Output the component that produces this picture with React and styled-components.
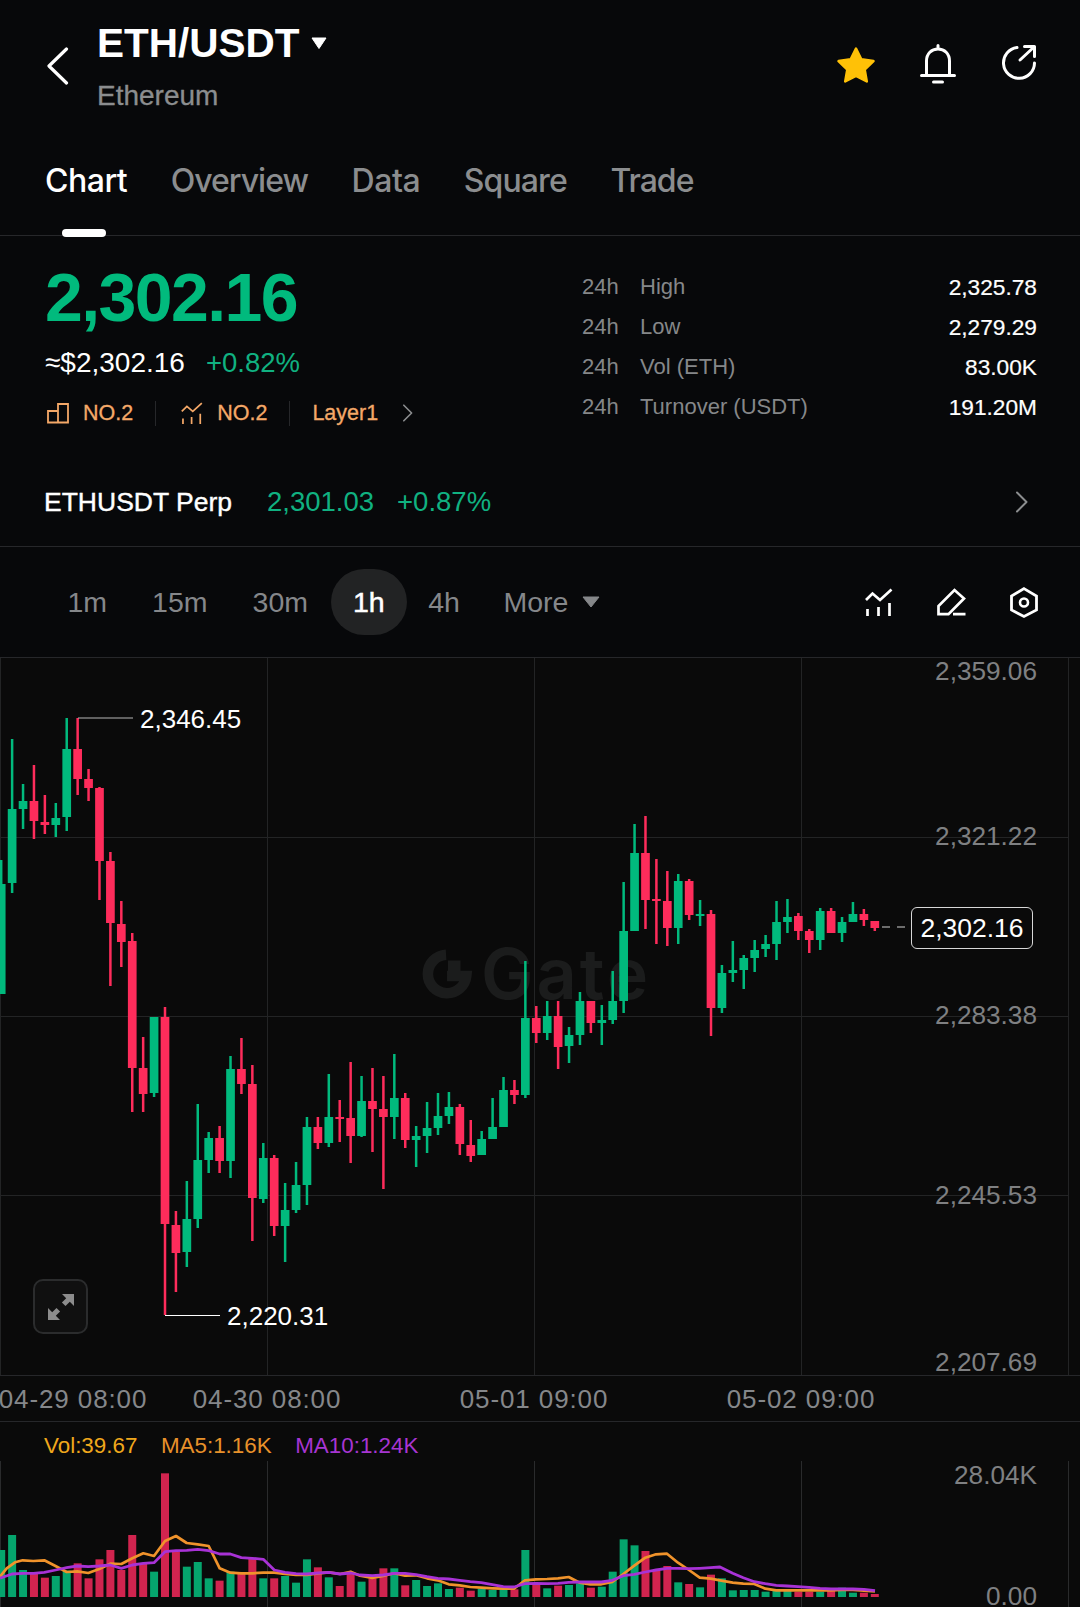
import React from "react";
import styled, { createGlobalStyle } from "styled-components";

const Global = createGlobalStyle`
  html, body { margin: 0; padding: 0; background: #07080a; }
  * { box-sizing: border-box; }
`;

const SANS = `"Liberation Sans", Arial, sans-serif`;
const UP = "#01ba7d";
const DOWN = "#fe2c5b";
const VOL_UP = "#05a56d";
const VOL_DOWN = "#d1244f";
const TAG = "#f4a868";

const Page = styled.div`
  width: 1080px;
  height: 1607px;
  overflow: hidden;
  background: #07080a;
  font-family: ${SANS};
  color: #fff;
`;

const Header = styled.header`
  height: 130px;
  display: flex;
  padding: 23px 43px 0 47px;
`;
const BackButton = styled.div`
  width: 50px;
  height: 40px;
  margin-top: 24px;
  svg { display: block; }
`;
const TitleBlock = styled.div`
  flex: 1;
  display: flex;
  flex-direction: column;
`;
const TitleLine = styled.div`
  display: flex;
  align-items: center;
  height: 40px;
  gap: 11px;
`;
const Title = styled.div`
  font-size: 40.5px;
  line-height: 40px;
  font-weight: 700;
`;
const Caret = styled.svg`
  display: block;
`;
const Subtitle = styled.div`
  margin-top: 17px;
  font-size: 28px;
  line-height: 32px;
  color: #8b8d8f;
  -webkit-text-stroke: 0.3px #8b8d8f;
`;
const HeaderIcons = styled.div`
  display: flex;
  align-items: flex-start;
  gap: 44px;
  padding-top: 21px;
  svg { display: block; }
`;
const StarIcon = styled.svg`
  margin-top: 2px;
`;

const Tabs = styled.nav`
  height: 106px;
  display: flex;
  gap: 43.5px;
  padding: 33px 0 0 45px;
  border-bottom: 1px solid #26272a;
`;
const Tab = styled.div`
  position: relative;
  height: 73px;
  font-family: Inter, sans-serif;
  font-size: 32px;
  line-height: 36px;
  font-weight: 500;
  letter-spacing: ${(p) => p.$ls}px;
  color: ${(p) => (p.$active ? "#fff" : "#8b8d8f")};
  ${(p) =>
    p.$active &&
    `&::after {
      content: "";
      position: absolute;
      left: 17px;
      bottom: -1px;
      width: 44px;
      height: 8px;
      border-radius: 4px;
      background: #fff;
    }`}
`;

const Quote = styled.section`
  height: 222px;
  display: flex;
  justify-content: space-between;
  padding: 27px 43px 0 45px;
`;
const QuoteLeft = styled.div`
  display: flex;
  flex-direction: column;
`;
const Price = styled.div`
  font-size: 68px;
  line-height: 68px;
  font-weight: 700;
  letter-spacing: -1.6px;
  color: ${UP};
`;
const SubPrice = styled.div`
  margin-top: 15px;
  display: flex;
  gap: 21px;
  font-size: 28px;
  line-height: 34px;
`;
const Change = styled.span`
  font-size: 27.5px;
  color: #10b181;
`;
const TagRow = styled.div`
  margin: 19px 0 0 2px;
  height: 28px;
  display: flex;
  align-items: center;
  font-size: 21.5px;
  color: ${TAG};
  -webkit-text-stroke: 0.3px ${TAG};
  svg { display: block; flex: none; }
`;
const Tag = styled.div`
  display: flex;
  align-items: center;
  gap: 14px;
  padding-right: 22px;
  margin-right: ${(p) => p.$mr}px;
  border-right: ${(p) => (p.$last ? "none" : "1px solid #26272a")};
`;
const TagChevron = styled.span`
  display: inline-flex;
  margin-left: 10px;
`;
const Stats = styled.div`
  width: 455px;
  padding-top: 4px;
  display: flex;
  flex-direction: column;
`;
const StatRow = styled.div`
  height: 40px;
  display: grid;
  grid-template-columns: 58px 1fr auto;
  align-items: center;
  font-size: 22px;
`;
const StatLabel = styled.span`
  color: #858789;
`;
const StatValue = styled.span`
  font-size: 22.7px;
  color: #fff;
  -webkit-text-stroke: 0.2px #fff;
`;

const PerpRow = styled.div`
  height: 89px;
  display: flex;
  align-items: center;
  padding: 0 52px 0 44px;
  border-bottom: 1px solid #26272a;
  gap: 35px;
  svg { display: block; margin-left: auto; }
`;
const PerpName = styled.div`
  font-size: 26.5px;
  -webkit-text-stroke: 0.4px #fff;
`;
const PerpPrices = styled.div`
  display: flex;
  gap: 23px;
  font-size: 27.5px;
  color: #10b181;
`;

const IntervalRow = styled.div`
  height: 111px;
  display: flex;
  align-items: center;
  padding: 0 42px 0 45px;
  border-bottom: 1px solid #26272a;
`;
const Interval = styled.div`
  height: 66px;
  display: flex;
  align-items: center;
  padding: 0 ${(p) => p.$px ?? 22.5}px;
  border-radius: 33px;
  font-size: 28.5px;
  background: ${(p) => (p.$active ? "#222324" : "transparent")};
  color: ${(p) => (p.$active ? "#fff" : "#85878a")};
  -webkit-text-stroke: ${(p) => (p.$active ? "0.5px #fff" : "0")};
`;
const MoreCaret = styled.svg`
  display: block;
  margin-left: 14px;
`;
const ToolIcons = styled.div`
  margin-left: auto;
  display: flex;
  align-items: center;
  gap: 44px;
  svg { display: block; }
`;

const ChartStage = styled.div`
  position: relative;
  height: 717px;
  background: #0a0a0a;
`;
const ChartSvg = styled.svg`
  position: relative;
  z-index: 1;
  display: block;
`;
const Watermark = styled.div`
  position: absolute;
  left: 422px;
  top: 290px;
  display: flex;
  align-items: center;
  gap: 7px;
  font-family: Inter, sans-serif;
  font-size: 70px;
  line-height: 50px;
  font-weight: 600;
  letter-spacing: 3px;
  color: #1b1c1c;
  svg { display: block; }
`;
const AxisLabel = styled.div`
  position: absolute;
  z-index: 2;
  right: 43px;
  transform: translateY(-50%);
  font-size: 26.2px;
  line-height: 20px;
  color: #7f8082;
`;
const PriceFlag = styled.div`
  position: absolute;
  z-index: 2;
  transform: translateY(-50%);
  font-size: 26px;
  line-height: 30px;
  color: #fff;
`;
const LastPrice = styled.div`
  position: absolute;
  z-index: 2;
  left: 911px;
  top: 249px;
  width: 122px;
  height: 42px;
  display: flex;
  align-items: center;
  justify-content: center;
  border: 1px solid #d8d8d8;
  border-radius: 6px;
  background: #0a0a0a;
  font-size: 26.5px;
  color: #fff;
`;
const ExpandButton = styled.div`
  position: absolute;
  z-index: 2;
  left: 33px;
  top: 621px;
  width: 55px;
  height: 55px;
  display: flex;
  align-items: center;
  justify-content: center;
  border: 2px solid #2b2c2d;
  border-radius: 10px;
  background: #101010;
`;

const TimeAxis = styled.div`
  position: relative;
  height: 47px;
  background: #0a0a0a;
  border-top: 1px solid #26272a;
  border-bottom: 1px solid #26272a;
`;
const TimeLabel = styled.span`
  position: absolute;
  top: 8px;
  transform: translateX(-50%);
  font-size: 26px;
  line-height: 30px;
  letter-spacing: 0.9px;
  white-space: nowrap;
  color: #85878a;
`;

const VolumePanel = styled.section`
  background: #0a0a0a;
  height: 185px;
`;
const Legend = styled.div`
  height: 39px;
  display: flex;
  align-items: center;
  gap: 23.5px;
  padding: 9px 0 0 44px;
  font-size: 22.4px;
`;
const LegendItem = styled.span`
  color: ${(p) => p.$c};
`;
const VolumeCanvas = styled.div`
  position: relative;
  height: 146px;
  svg { display: block; }
`;

const C = [
  ["g",860,884,994,994],["g",739,809,883,893],["g",784,801,809,829],["r",765,801,821,839],["r",795,822,825,834],
  ["g",803,818,825,837],["g",718,749,817,831],["r",718,749,779,795],["r",769,779,788,801],["r",787,788,861,900],
  ["r",852,861,923,986],["r",901,924,942,967],["r",933,941,1068,1112],["r",1037,1068,1094,1112],["g",1017,1017,1093,1097],
  ["r",1007,1017,1224,1315],["r",1211,1225,1253,1292],["g",1181,1219,1252,1267],["g",1104,1160,1219,1228],["g",1132,1138,1160,1173],
  ["r",1126,1138,1161,1173],["g",1056,1069,1161,1178],["r",1038,1069,1084,1094],["r",1065,1084,1198,1241],["g",1143,1158,1199,1203],
  ["r",1155,1158,1226,1236],["g",1183,1210,1226,1262],["g",1162,1185,1210,1213],["g",1117,1127,1185,1205],["r",1117,1127,1143,1149],
  ["g",1074,1117,1143,1147],["r",1100,1117,1119,1142],["r",1062,1118,1136,1163],["g",1076,1101,1136,1137],["r",1068,1101,1109,1152],
  ["r",1076,1109,1117,1189],["g",1054,1098,1117,1139],["r",1093,1098,1140,1148],["g",1126,1136,1140,1167],["g",1102,1128,1136,1153],
  ["g",1093,1116,1128,1135],["g",1092,1107,1116,1124],["r",1104,1107,1144,1155],["r",1120,1145,1156,1162],["g",1131,1139,1155,1155],
  ["g",1098,1127,1139,1139],["g",1077,1090,1127,1127],["r",1080,1090,1095,1104],["g",961,1018,1095,1098],["r",1006,1018,1033,1043],
  ["g",1001,1016,1033,1040],["r",1001,1016,1047,1069],["g",1027,1035,1046,1063],["g",992,1001,1035,1045],["r",1001,1001,1023,1033],
  ["g",1005,1020,1023,1045],["g",971,1001,1020,1024],["g",882,931,1001,1013],["g",824,853,931,931],["r",816,853,900,929],
  ["r",859,899,901,944],["r",871,901,928,946],["g",874,881,928,944],["r",879,881,915,920],["g",900,914,915,926],
  ["r",910,914,1008,1036],["g",965,973,1008,1013],["g",941,970,973,982],["g",955,958,970,989],["g",940,950,958,972],
  ["g",935,944,949,957],["g",901,922,944,960],["g",899,917,922,933],["r",913,916,931,940],["r",929,931,940,953],
  ["g",908,911,940,950],["r",908,911,933,933],["g",917,922,933,942],["g",902,914,922,922],["r",909,914,920,926],
  ["r",921,921,928,931],
];
const VOL = [450,405,510,520,533,528,512,490,535,478,450,510,405,490,515,220,455,500,486,535,542,515,520,475,535,535,528,548,478,502,532,558,520,545,535,505,505,556,540,558,550,567,563,572,566,570,568,568,450,550,565,557,555,550,563,560,515,418,436,453,512,498,547,552,562,524,535,571,570,570,575,573,573,575,575,575,573,563,578,578,582];

const cx = (i) => 1.2 + 10.92 * i;
const toLine = (segs) =>
  segs
    .flatMap(([off, arr]) => arr.map(([zx, zy]) => `${(off + zx / 3).toFixed(1)},${(1400 + zy / 3).toFixed(1)}`))
    .join(" ");

const MA5 = toLine([
  [0, [[0,530],[20,505],[45,487],[68,481],[100,483],[133,481],[165,497],[200,516],[232,514],[265,519],[298,507],[331,491],[364,492],[397,475],[430,460],[462,468],[495,423],[528,408],[560,429],[593,433],[626,438],[659,505],[691,518],[724,520],[757,520],[790,518],[823,518],[855,522],[888,525],[921,525],[954,520],[987,517],[1020,522],[1052,515]]],
  [360, [[0,527],[37,534],[70,528],[102,520],[135,527],[168,526],[201,535],[233,541],[266,553],[299,556],[331,561],[364,563],[397,565],[430,566],[462,566],[495,541],[528,538],[561,537],[594,535],[626,531],[659,548],[691,553],[724,553],[757,546],[790,522],[823,497],[856,473],[888,463],[921,461],[954,488],[987,510],[1019,533],[1052,536]]],
  [720, [[0,541],[38,548],[70,551],[103,552],[136,566],[169,571],[202,571],[234,571],[267,571],[300,571],[333,571],[366,570],[399,570],[465,574]]],
]);
const MA10 = toLine([
  [0, [[0,535],[36,522],[68,520],[100,520],[133,517],[167,510],[200,503],[232,498],[265,500],[298,498],[331,495],[364,505],[397,495],[430,490],[462,488],[495,455],[528,452],[560,451],[593,448],[626,452],[659,462],[691,462],[724,473],[757,475],[790,478],[823,510],[855,517],[888,521],[921,522],[954,519],[987,517],[1020,522],[1052,519]]],
  [360, [[0,525],[37,527],[70,525],[102,520],[135,520],[168,524],[201,530],[233,535],[266,537],[299,541],[331,545],[364,548],[397,554],[430,560],[462,561],[495,551],[528,550],[561,551],[594,550],[626,547],[659,546],[691,546],[724,546],[757,541],[790,527],[823,523],[856,516],[888,510],[921,505],[954,505],[987,506],[1019,505],[1052,503]]],
  [720, [[0,501],[38,520],[70,533],[103,545],[136,551],[169,556],[202,558],[234,560],[267,562],[300,565],[333,567],[366,567],[399,567],[432,568],[465,572]]],
]);

const VGRID = [0.5, 267.5, 534.5, 801.5, 1068.5];
const HGRID = [837.5, 1016.5, 1195.5];

const Chevron = ({ c = "#8b8d8f", w = 13, h = 22, sw = 2 }) => (
  <svg width={w} height={h} viewBox="0 0 13 22" fill="none">
    <path d="M2 1.5 11.5 11 2 20.5" stroke={c} strokeWidth={sw} strokeLinecap="round" strokeLinejoin="round" />
  </svg>
);

const RankIcon = () => (
  <svg width="22" height="22" viewBox="0 0 22 22" fill="none" stroke={TAG} strokeWidth="1.800">
    <path d="M1 9h10v11.500H1zM11 9V2h10v18.500H11" />
  </svg>
);
const TrendIcon = ({ c = TAG, size = 22, sw = 2.2 }) => (
  <svg width={size} height={size} viewBox="0 0 28 28" fill="none" stroke={c} strokeWidth={sw}>
    <path d="M1 12 7.500 5.500 15 12 26.500 1.500" strokeLinejoin="miter" />
    <path d="M2.500 21v7M13.500 19v9M24.500 15v13" />
  </svg>
);

const STATS = [
  ["High", "2,325.78"],
  ["Low", "2,279.29"],
  ["Vol (ETH)", "83.00K"],
  ["Turnover (USDT)", "191.20M"],
];

export default function App() {
  return (
    <Page>
      <Global />
      <Header>
        <BackButton>
          <svg width="22" height="38" viewBox="0 0 22 38" fill="none">
            <path d="M19.500 2 2 19l17.500 17" stroke="#fff" strokeWidth="3.200" strokeLinecap="round" strokeLinejoin="round" />
          </svg>
        </BackButton>
        <TitleBlock>
          <TitleLine>
            <Title>ETH/USDT</Title>
            <Caret width="16" height="12" viewBox="0 0 16 12">
              <path d="M1 1h14l-7 10.500z" fill="#fff" stroke="#fff" strokeLinejoin="round" />
            </Caret>
          </TitleLine>
          <Subtitle>Ethereum</Subtitle>
        </TitleBlock>
        <HeaderIcons>
          <StarIcon width="40" height="38" viewBox="0 0 40 38">
            <path d="M20 2.500 25.300 13.300 37.500 15 28.700 23.500 30.800 35.500 20 29.800 9.200 35.500 11.300 23.500 2.500 15 14.700 13.300z" fill="#ffc107" stroke="#ffc107" strokeWidth="2.500" strokeLinejoin="round" />
          </StarIcon>
          <svg width="36" height="40" viewBox="0 0 36 40" fill="none" stroke="#fff" strokeWidth="3" strokeLinecap="round" strokeLinejoin="round">
            <path d="M18 1.500V5M6.500 31.500V17C6.500 9.800 11.500 5 18 5s11.500 4.800 11.500 12v14.500M1.500 31.500h33M13.500 38h9" />
          </svg>
          <svg width="37" height="37" viewBox="0 0 37 37" fill="none" stroke="#fff" strokeWidth="3" strokeLinecap="round" strokeLinejoin="round">
            <path d="M17 3.500A15.500 15.500 0 1 0 34.500 19" />
            <path d="M20 16 34 3M24.500 2.500h10v10" />
          </svg>
        </HeaderIcons>
      </Header>

      <Tabs>
        <Tab $active $ls={-0.5}>Chart</Tab>
        <Tab $ls={-1}>Overview</Tab>
        <Tab $ls={-0.4}>Data</Tab>
        <Tab $ls={-0.9}>Square</Tab>
        <Tab $ls={-1}>Trade</Tab>
      </Tabs>

      <Quote>
        <QuoteLeft>
          <Price>2,302.16</Price>
          <SubPrice>
            <span>≈$2,302.16</span>
            <Change>+0.82%</Change>
          </SubPrice>
          <TagRow>
            <Tag $mr={25}>
              <RankIcon />
              <span>NO.2</span>
            </Tag>
            <Tag $mr={22}>
              <TrendIcon />
              <span>NO.2</span>
            </Tag>
            <Tag $last $mr={0}>
              <span>Layer1</span>
              <TagChevron>
                <Chevron w={11} h={18} />
              </TagChevron>
            </Tag>
          </TagRow>
        </QuoteLeft>
        <Stats>
          {STATS.map(([label, value]) => (
            <StatRow key={label}>
              <StatLabel>24h</StatLabel>
              <StatLabel>{label}</StatLabel>
              <StatValue>{value}</StatValue>
            </StatRow>
          ))}
        </Stats>
      </Quote>

      <PerpRow>
        <PerpName>ETHUSDT Perp</PerpName>
        <PerpPrices>
          <span>2,301.03</span>
          <span>+0.87%</span>
        </PerpPrices>
        <Chevron w={13} h={22} />
      </PerpRow>

      <IntervalRow>
        <Interval>1m</Interval>
        <Interval>15m</Interval>
        <Interval>30m</Interval>
        <Interval $active>1h</Interval>
        <Interval $px={21}>4h</Interval>
        <Interval>
          More
          <MoreCaret width="18" height="12" viewBox="0 0 18 12">
            <path d="M1 1h16l-8 10z" fill="#85878a" stroke="#85878a" strokeLinejoin="round" />
          </MoreCaret>
        </Interval>
        <ToolIcons>
          <TrendIcon c="#fff" size={28} sw={2.7} />
          <svg width="29" height="28" viewBox="0 0 29 28" fill="none" stroke="#fff" strokeWidth="2.700" strokeLinejoin="miter">
            <path d="M1.500 26.200V18L17.500 2l9.500 8.500-15.500 15.700zM16 26.200h12.500" />
          </svg>
          <svg width="28" height="31" viewBox="0 0 28 31" fill="none" stroke="#fff" strokeWidth="2.800" strokeLinejoin="miter">
            <path d="M14 1.600 26.500 9v14L14 29.400 1.500 23V9z" />
            <circle cx="14" cy="15.500" r="4" strokeWidth="2.600" />
          </svg>
        </ToolIcons>
      </IntervalRow>

      <ChartStage>
        <Watermark>
          <svg width="52" height="52" viewBox="0 0 54 52" fill="none">
            <path d="M25 6A20 20 0 1 0 46 28H26" stroke="#1b1c1c" strokeWidth="11" />
            <rect x="27" y="12" width="13" height="13" fill="#1b1c1c" />
          </svg>
          <span>Gate</span>
        </Watermark>
        <ChartSvg width="1080" height="717" viewBox="0 658 1080 717">
          {HGRID.map((y) => (
            <line key={y} x1="0" x2="1068" y1={y} y2={y} stroke="#232425" />
          ))}
          {VGRID.map((x) => (
            <line key={x} x1={x} x2={x} y1="658" y2="1375" stroke="#232425" />
          ))}
          {C.map(([k, wt, bt, bb, wb], i) => {
            const f = k === "g" ? UP : DOWN;
            const x = cx(i);
            return (
              <g key={i} fill={f}>
                <rect x={x - 1.25} y={wt} width="2.500" height={wb - wt} />
                <rect x={x - 4.35} y={bt} width="8.700" height={Math.max(bb - bt, 2)} />
              </g>
            );
          })}
          <path d="M78 718h55" stroke="#b5b5b5" strokeWidth="1.200" />
          <path d="M165 1315.500h55" stroke="#fff" strokeWidth="1.200" />
          <path d="M882 927h29" stroke="#d0d0d0" strokeWidth="1" strokeDasharray="8 7" />
        </ChartSvg>
        <AxisLabel style={{ top: 13 }}>2,359.06</AxisLabel>
        <AxisLabel style={{ top: 178 }}>2,321.22</AxisLabel>
        <AxisLabel style={{ top: 357 }}>2,283.38</AxisLabel>
        <AxisLabel style={{ top: 537 }}>2,245.53</AxisLabel>
        <AxisLabel style={{ top: 704 }}>2,207.69</AxisLabel>
        <PriceFlag style={{ left: 140, top: 61 }}>2,346.45</PriceFlag>
        <PriceFlag style={{ left: 227, top: 658 }}>2,220.31</PriceFlag>
        <LastPrice>2,302.16</LastPrice>
        <ExpandButton>
          <svg width="28" height="28" viewBox="0 0 28 28" fill="#8c8c8c">
            <path d="M27 1v12l-4.200-4.200-4.300 4.300-3.600-3.600 4.300-4.300L15 1zM1 27V15l4.200 4.200 4.300-4.300 3.600 3.600-4.300 4.300L13 27z" />
          </svg>
        </ExpandButton>
      </ChartStage>

      <TimeAxis>
        <TimeLabel style={{ left: 73 }}>04-29 08:00</TimeLabel>
        <TimeLabel style={{ left: 267 }}>04-30 08:00</TimeLabel>
        <TimeLabel style={{ left: 534 }}>05-01 09:00</TimeLabel>
        <TimeLabel style={{ left: 801 }}>05-02 09:00</TimeLabel>
      </TimeAxis>

      <VolumePanel>
        <Legend>
          <LegendItem $c="#f0a81c">Vol:39.67</LegendItem>
          <LegendItem $c="#e8912a">MA5:1.16K</LegendItem>
          <LegendItem $c="#a735d2">MA10:1.24K</LegendItem>
        </Legend>
        <VolumeCanvas>
          <svg width="1080" height="146" viewBox="0 1461 1080 146">
            {VGRID.map((x) => (
              <line key={x} x1={x} x2={x} y1="1461" y2="1607" stroke="#2a2b2c" />
            ))}
            {VOL.map((zy, i) => {
              const top = 1400 + zy / 3;
              return (
                <rect
                  key={i}
                  x={cx(i) - 4}
                  y={top}
                  width="8"
                  height={1597 - top}
                  fill={C[i][0] === "g" ? VOL_UP : VOL_DOWN}
                />
              );
            })}
            <polyline points={MA5} fill="none" stroke="#f0932b" strokeWidth="2.700" strokeLinejoin="round" />
            <polyline points={MA10} fill="none" stroke="#a832d6" strokeWidth="2.800" strokeLinejoin="round" />
          </svg>
          <AxisLabel style={{ top: 14 }}>28.04K</AxisLabel>
          <AxisLabel style={{ top: 135 }}>0.00</AxisLabel>
        </VolumeCanvas>
      </VolumePanel>
    </Page>
  );
}
